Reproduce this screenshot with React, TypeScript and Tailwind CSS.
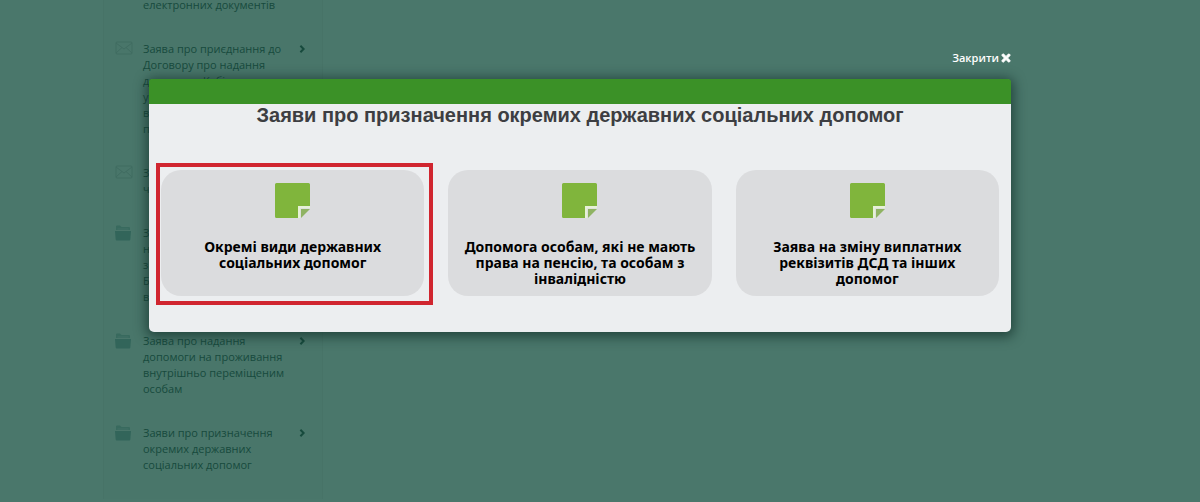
import React from "react";
import { FaTimes } from "react-icons/fa";

type MenuItem = { icon: "mail" | "folder" | "none"; text: string[] };

const menu: MenuItem[] = [
  { icon: "none", text: ["електронних документів"] },
  {
    icon: "mail",
    text: [
      "Заява про приєднання до",
      "Договору про надання",
      "доступу до Кабінету",
      "установи для подання",
      "відомостей та",
      "повідомлень",
    ],
  },
  { icon: "mail", text: ["Заява про зміну", "членів родини"] },
  {
    icon: "folder",
    text: ["Заява про", "надання послуг", "з реєстрації", "Бюджетної", "виплати"],
  },
  {
    icon: "folder",
    text: ["Заява про надання", "допомоги на проживання", "внутрішньо переміщеним", "особам"],
  },
  {
    icon: "folder",
    text: ["Заяви про призначення", "окремих державних", "соціальних допомог"],
  },
];

const cards = [
  { lines: ["Окремі види державних", "соціальних допомог"], selected: true },
  {
    lines: ["Допомога особам, які не мають", "права на пенсію, та особам з", "інвалідністю"],
    selected: false,
  },
  {
    lines: ["Заява на зміну виплатних", "реквізитів ДСД та інших", "допомог"],
    selected: false,
  },
];

function MailIcon() {
  return (
    <svg viewBox="0 0 18 14" className="h-3.5 w-[18px]" fill="none" stroke="#406c61" strokeWidth="1">
      <rect x="1" y="1" width="16" height="12" rx="1" />
      <path d="M1 2l8 6 8-6M1 12l6-5.5M17 12l-6-5.5" />
    </svg>
  );
}

function FolderIcon() {
  return (
    <svg viewBox="0 0 16 16" className="h-4 w-4" fill="#32655a">
      <path d="M1 5V1.500Q1 .5 2 .5H5L6.500 2H14Q15 2 15 3V5Z" opacity=".7" />
      <path d="M0 6H16L15.300 14.500Q15.200 15.500 14.200 15.500H1.800Q.8 15.500.7 14.500Z" />
      <path d="M2.500 4H13.500" stroke="#4a776b" strokeWidth=".6" />
    </svg>
  );
}

function ChevronIcon() {
  return (
    <svg viewBox="0 0 8 10" className="mt-1 h-2 w-2 shrink-0" fill="none" stroke="#174a3d" strokeWidth="2.500">
      <path d="M2 1l4 4-4 4" />
    </svg>
  );
}

function NoteIcon() {
  return (
    <svg viewBox="0 0 35 35" className="h-[35px] w-[35px]" aria-hidden="true">
      <path d="M1.500 0H33.500Q35 0 35 1.500V23H23V35H1.500Q0 35 0 33.500V1.500Q0 0 1.500 0Z" fill="#80b53c" />
      <path d="M23 35V23H35V25.200H25.200V35Z" fill="#e6f1d6" />
      <path d="M26 26H35L26 35Z" fill="#8fb363" />
    </svg>
  );
}

export default function App() {
  return (
    <div className="relative h-screen overflow-hidden bg-[#4a776b] font-['Open_Sans',sans-serif]">
      <nav className="ml-[103px] min-h-full w-[220px] border-x border-[#477367] bg-[#49766a]">
        <ul className="-mt-[3px] flex flex-col gap-7 pr-4 pl-[11px]">
          {menu.map((item) => (
            <li key={item.text.join(" ")}>
              <a href="#" className="flex text-[11px] leading-4 text-[#174a3d]">
                <span className="w-7 shrink-0">
                  {item.icon === "mail" && <MailIcon />}
                  {item.icon === "folder" && <FolderIcon />}
                </span>
                <span className="grow whitespace-nowrap">
                  {item.text.map((line) => (
                    <span key={line} className="block">
                      {line}
                    </span>
                  ))}
                </span>
                {item.icon !== "none" && <ChevronIcon />}
              </a>
            </li>
          ))}
        </ul>
      </nav>

      <div className="absolute inset-0 pt-[50px] pr-[189px] pl-[149px]">
        <div className="flex justify-end">
          <button type="button" className="flex items-center gap-0.5 text-[11px] leading-4 font-semibold text-white">
            Закрити
            <FaTimes className="h-3 w-2.5" stroke="white" strokeWidth="40" />
          </button>
        </div>

        <section
          role="dialog"
          aria-labelledby="dialog-title"
          className="mt-[13px] rounded-[5px] bg-[#eceef0] pb-9 shadow-[0_2px_12px_3px_rgba(15,45,38,0.65)]"
        >
          <div className="h-[25px] rounded-t-[3px] bg-[#3b9127]" />
          <h1
            id="dialog-title"
            className="text-center font-['Liberation_Sans',sans-serif] text-[20px] leading-[22px] font-bold text-[#3d3e42]"
          >
            Заяви про призначення окремих державних соціальних допомог
          </h1>
          <div className="mt-11 grid grid-cols-3 gap-6 px-3">
            {cards.map((card) => (
              <div key={card.lines[0]} className="relative">
                <button
                  type="button"
                  className="flex h-[126px] w-full flex-col items-center rounded-[20px] bg-[#dbdcde] pt-[13px] font-['Noto_Sans',sans-serif] text-[14px] leading-4 font-bold text-black"
                >
                  <NoteIcon />
                  <span className="mt-[21px] whitespace-nowrap">
                    {card.lines.map((line) => (
                      <span key={line} className="block">
                        {line}
                      </span>
                    ))}
                  </span>
                </button>
                {card.selected && (
                  <div className="pointer-events-none absolute -top-[7px] -right-[9px] -bottom-[9px] -left-[5px] border-4 border-[#d0252f]" />
                )}
              </div>
            ))}
          </div>
        </section>
      </div>
    </div>
  );
}
